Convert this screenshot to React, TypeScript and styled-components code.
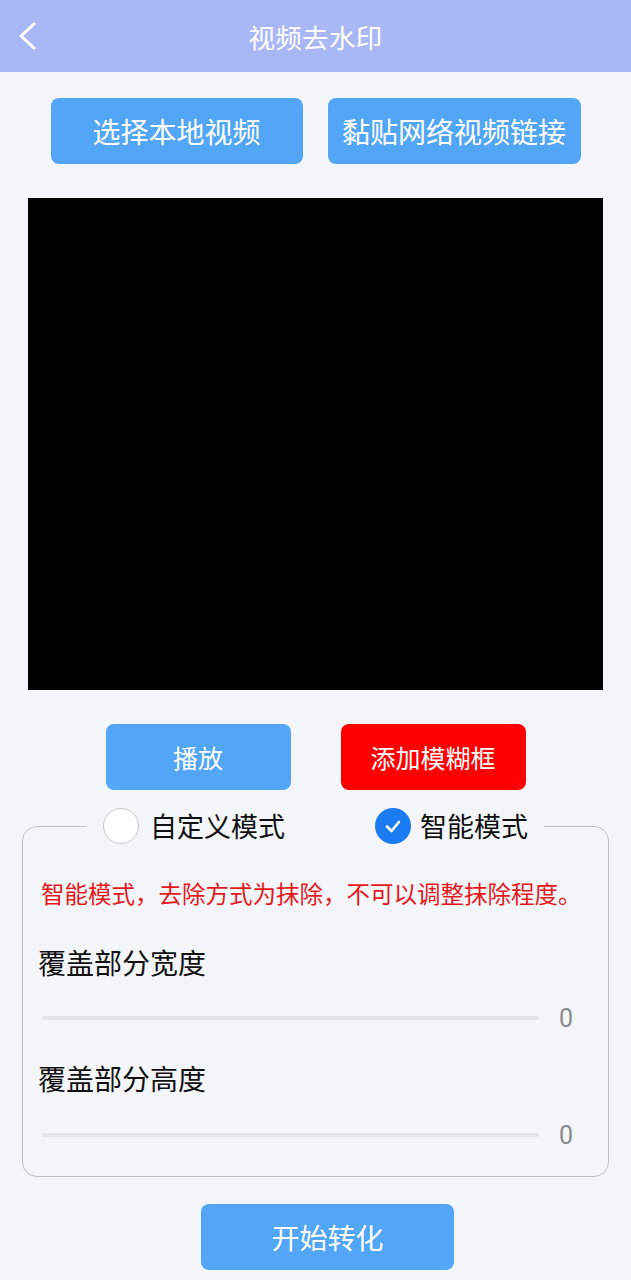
import React, {useState} from "react";
import styled, {createGlobalStyle} from "styled-components";

const GlobalStyle = createGlobalStyle`
  body {
    margin: 0;
    background: #f4f5f9;
    font-family: "Noto Sans CJK SC", "Noto Sans", sans-serif;
  }
`

const Page = styled.div`
  width: 631px;
  min-height: 1280px;
  background: #f4f5f9;
  display: flex;
  flex-direction: column;
  align-items: center;
`

const Header = styled.header`
  align-self: stretch;
  height: 72px;
  background: #a9b8f4;
  display: flex;
  align-items: center;
  justify-content: center;
  position: relative;
`

const BackButton = styled.div`
  position: absolute;
  left: 17px;
  top: 22px;
  width: 22px;
  height: 28px;
  display: flex;
`

const Title = styled.h1`
  margin: 0;
  font-size: 26.5px;
  font-weight: 400;
  color: #ffffff;
  letter-spacing: 0.3px;
`

const ButtonRow = styled.div<{ gap: number; top: number; shift?: number }>`
  display: flex;
  gap: ${({gap}) => gap}px;
  margin-top: ${({top}) => top}px;
  margin-left: ${({shift}) => (shift ?? 0) * 2}px;
`

const ActionButton = styled.button<{ w: number; danger?: boolean; size?: number }>`
  width: ${({w}) => w}px;
  height: 66px;
  border: none;
  border-radius: 8px;
  background: ${({danger}) => danger ? "#ff0000" : "#52a6f5"};
  color: #ffffff;
  font-family: inherit;
  font-size: ${({size}) => size ?? 28}px;
  padding: 0;
  display: flex;
  align-items: center;
  justify-content: center;
`

const Video = styled.div`
  width: 575px;
  height: 492px;
  margin-top: 34px;
  background: #000000;
`

const Box = styled.fieldset`
  box-sizing: border-box;
  width: 587px;
  margin: 18px 0 0;
  padding: 0 15px 21px 15px;
  border: 1.5px solid #bfbfc3;
  border-radius: 15px;
  min-inline-size: 0;
`

const Legend = styled.legend`
  margin-left: 48px;
  padding: 0 16px 0 17px;
  height: 36px;
  display: flex;
  align-items: center;
  gap: 90px;
  background: #f4f5f9;
`

const Option = styled.label<{ gap: number }>`
  display: flex;
  align-items: center;
  gap: ${({gap}) => gap}px;
  font-size: 27px;
  color: #111111;
  line-height: 36px;
  cursor: pointer;
`

const RadioCircle = styled.span<{ checked: boolean }>`
  box-sizing: border-box;
  width: 36px;
  height: 36px;
  border-radius: 50%;
  background: ${({checked}) => checked ? "#1a7cf0" : "#ffffff"};
  border: ${({checked}) => checked ? "none" : "1.5px solid #c8c8c8"};
  display: flex;
  align-items: center;
  justify-content: center;
`

const Hint = styled.p`
  margin: 33px 0 0 3px;
  font-size: 23.5px;
  line-height: 32px;
  color: #e3191c;
  white-space: nowrap;
`

const FieldLabel = styled.div<{ top: number }>`
  margin-top: ${({top}) => top}px;
  font-size: 28px;
  line-height: 40px;
  color: #111111;
`

const SliderRow = styled.div<{ top: number }>`
  margin-top: ${({top}) => top}px;
  height: 40px;
  display: flex;
  align-items: center;
`

const Track = styled.div`
  flex: 1;
  height: 4px;
  margin-left: 4px;
  border-radius: 2px;
  background: #e4e5e9;
`

const Value = styled.span`
  width: 54px;
  text-align: center;
  font-size: 25px;
  color: #8a8a8e;
  font-family: "Roboto", "Noto Sans", sans-serif;
`

function Radio(props: { checked: boolean }) {
    return (
        <RadioCircle checked={props.checked}>
            {props.checked && (
                <svg width="22" height="22" viewBox="0 0 22 22">
                    <polyline points="5,11.5 9.5,16 17,7" fill="none" stroke="#ffffff" strokeWidth="2.6"
                              strokeLinecap="round" strokeLinejoin="round"/>
                </svg>
            )}
        </RadioCircle>
    );
}

export default function App() {
    const [mode, setMode] = useState<"custom" | "smart">("smart");

    return (
        <Page>
            <GlobalStyle/>
            <Header>
                <BackButton>
                    <svg width="22" height="28" viewBox="0 0 22 28">
                        <polyline points="17,2 4,14 17,26" fill="none" stroke="#ffffff" strokeWidth="3"
                                  strokeLinecap="round" strokeLinejoin="round"/>
                    </svg>
                </BackButton>
                <Title>视频去水印</Title>
            </Header>

            <ButtonRow gap={25} top={26}>
                <ActionButton w={252}>选择本地视频</ActionButton>
                <ActionButton w={253}>黏贴网络视频链接</ActionButton>
            </ButtonRow>

            <Video/>

            <ButtonRow gap={50} top={34}>
                <ActionButton w={185} size={25}>播放</ActionButton>
                <ActionButton w={185} size={25} danger>添加模糊框</ActionButton>
            </ButtonRow>

            <Box>
                <Legend>
                    <Option gap={11} onClick={() => setMode("custom")}>
                        <Radio checked={mode === "custom"}/>
                        自定义模式
                    </Option>
                    <Option gap={9} onClick={() => setMode("smart")}>
                        <Radio checked={mode === "smart"}/>
                        智能模式
                    </Option>
                </Legend>
                <Hint>智能模式，去除方式为抹除，不可以调整抹除程度。</Hint>
                <FieldLabel top={33}>覆盖部分宽度</FieldLabel>
                <SliderRow top={16}>
                    <Track/>
                    <Value>0</Value>
                </SliderRow>
                <FieldLabel top={20}>覆盖部分高度</FieldLabel>
                <SliderRow top={17}>
                    <Track/>
                    <Value>0</Value>
                </SliderRow>
            </Box>

            <ButtonRow gap={0} top={27} shift={12}>
                <ActionButton w={253}>开始转化</ActionButton>
            </ButtonRow>
        </Page>
    );
}
